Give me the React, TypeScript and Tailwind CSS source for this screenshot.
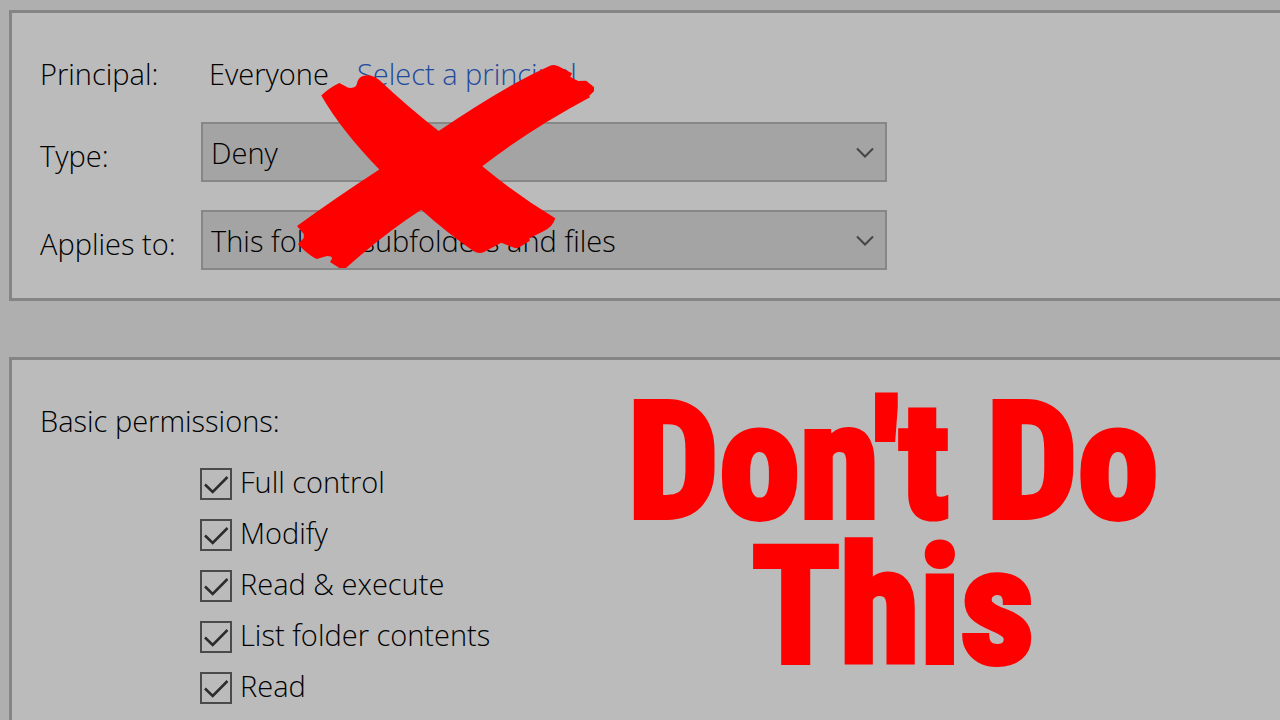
import { useState } from 'react';

const PERMISSIONS = ['Full control', 'Modify', 'Read & execute', 'List folder contents', 'Read'];

interface SelectRowProps {
  id: string;
  label: string;
  options: string[];
}

function SelectRow({ id, label, options }: SelectRowProps) {
  return (
    <div className="flex h-[60px] items-center">
      <label htmlFor={id} className="w-[161px] shrink-0 pt-2">
        {label}
      </label>
      <div className="relative h-full w-full max-w-[686px]">
        <select
          id={id}
          className="h-full w-full appearance-none border-2 border-[#878787] bg-[#a4a4a4] pl-2 pr-12 pt-0.5 outline-none"
        >
          {options.map((o) => (
            <option key={o}>{o}</option>
          ))}
        </select>
        <svg
          viewBox="0 0 20 12"
          fill="none"
          stroke="#444"
          strokeWidth="2"
          className="pointer-events-none absolute right-3 top-6 h-3 w-5"
        >
          <path d="M2 2.500l8 8 8-8" />
        </svg>
      </div>
    </div>
  );
}

function PermissionItem({ name }: { name: string }) {
  const [checked, setChecked] = useState(true);

  return (
    <li className="h-[51px]">
      <label className="flex h-8 items-center gap-2">
        <span className="grid h-8 w-8 shrink-0">
          <input
            type="checkbox"
            checked={checked}
            onChange={(e) => setChecked(e.target.checked)}
            className="col-start-1 row-start-1 h-8 w-8 appearance-none border-2 border-[#4a4a4a]"
          />
          {checked && (
            <svg
              viewBox="0 0 32 32"
              fill="none"
              stroke="#2b2b2b"
              strokeWidth="2.5"
              className="pointer-events-none col-start-1 row-start-1 h-8 w-8"
            >
              <path d="M5 16.5l7.7 7.5L27.5 9" />
            </svg>
          )}
        </span>
        <span className="pb-1 leading-7">{name}</span>
      </label>
    </li>
  );
}

// Brush-stroke cross drawn over the form
function BrushCross() {
  return (
    <svg
      viewBox="297 64 298 205"
      fill="#ff0000"
      className="pointer-events-none absolute left-[285px] top-[51px] h-[205px] w-[298px]"
    >
      <path
        d="M321.3 95.5 Q329 88 339.3 83 L345 86 Q349 89 354 87.300 Q357 86 357.300 82
           Q359 77 363 76 Q371 73.500 379.300 80 Q408 107 438.700 131
           Q505 86 549 66.200 Q554 63.500 559 66.500 L572 73.300 L570.300 76.700
           Q574 79 578.300 81 L586 80.700 L594 87 V91.300 L589.300 95.700 L590 97.300
           Q529 130 482.300 166.300 Q517 195 555.300 218.300
           Q553 227 543 231.500 L529.300 238.300 L530 240.700
           L519 247.500 Q516 249 512 247 L501.300 242.700 L484 252 Q479 254.500 473.300 251
           Q446 232 421.300 209.700 Q385 233 346 268 H339.300 L330 262 L331.700 259.300
           Q333 256 327 256 L316.700 259 Q308 255 298 244.300 L303.700 238 V234 L297 226
           Q334 199 379.300 169.500 Q341 130 321.300 95.500z"
      />
    </svg>
  );
}

export default function App() {
  return (
    <main className="flex h-screen flex-col gap-14 overflow-hidden bg-[#afafaf] pl-[9px] pt-2.5 font-['Open_Sans','Noto_Sans',sans-serif] text-[29px] font-light text-black">
      <section className="relative flex flex-col gap-7 border-[3px] border-r-0 border-[#858585] bg-[#bbb] pb-7 pl-7 pt-10">
        <div className="flex h-[41px] items-center">
          <span className="w-[161px] shrink-0">Principal:</span>
          <span className="pl-2">Everyone</span>
          <a href="#principal" className="pl-7 text-[#1f4a9c]">
            Select a principal
          </a>
        </div>
        <SelectRow id="type" label="Type:" options={['Deny', 'Allow']} />
        <SelectRow
          id="applies-to"
          label="Applies to:"
          options={['This folder, subfolders and files', 'This folder only']}
        />
        <BrushCross />
      </section>

      <section className="flex flex-1 border-[3px] border-b-0 border-r-0 border-[#858585] bg-[#bbb]">
        <div className="w-[494px] shrink-0 pl-7 pt-10">
          <h2 className="leading-[42px]">Basic permissions:</h2>
          <ul className="pl-40 pt-[26px]">
            {PERMISSIONS.map((name) => (
              <PermissionItem key={name} name={name} />
            ))}
          </ul>
        </div>
        <h1 className="flex-1 pt-[30px] text-center font-['Liberation_Sans_Narrow','Roboto_Condensed','DejaVu_Sans_Condensed',sans-serif] text-[162px] font-bold leading-[145px] text-[#ff0000] [-webkit-text-stroke:6px_#ff0000]">
          Don't Do
          <br />
          This
        </h1>
      </section>
    </main>
  );
}
